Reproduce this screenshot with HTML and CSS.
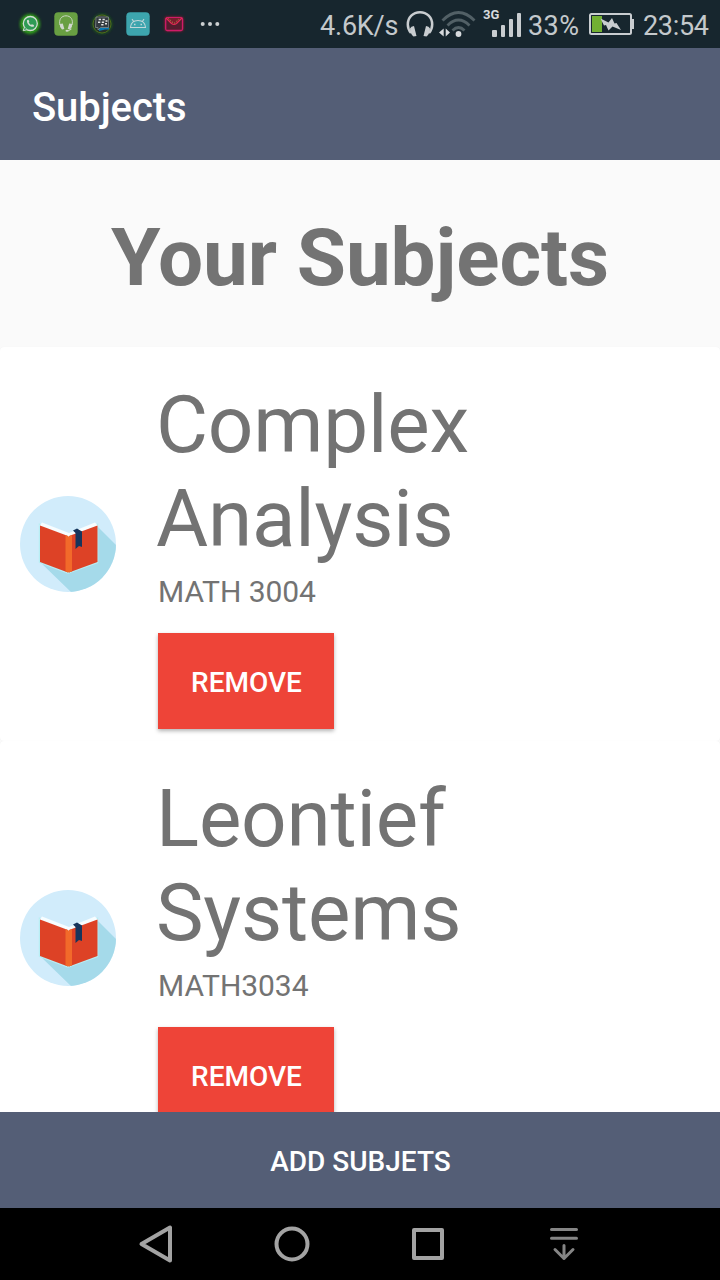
FILE: index.html
```html
<!DOCTYPE html>
<html lang="en">
<head>
<meta charset="utf-8">
<title>Subjects</title>
<link rel="stylesheet" href="styles.css">
</head>
<body>
<svg class="defs" width="0" height="0" aria-hidden="true">
  <defs>
    <clipPath id="disc"><circle cx="48" cy="48" r="48"/></clipPath>
    <filter id="glow" x="-50%" y="-50%" width="200%" height="200%"><feGaussianBlur stdDeviation="1.6"/></filter>
    <filter id="soft"><feGaussianBlur stdDeviation=".6"/></filter>
    <symbol id="book" viewBox="0 0 96 96">
      <g clip-path="url(#disc)">
        <rect width="96" height="96" fill="#d1ecfb"/>
        <path d="M77 30L96 49V96H51L20 66L48 76L77 66Z" fill="#a5daea"/>
      </g>
      <g filter="url(#soft)">
        <path d="M20 29L48 40L77 29V66L48 76.500L20 66Z" fill="none" stroke="#b9eef4" stroke-width="2.500"/>
        <path d="M22 26.500L49 37L75 26.500L78 30L48.500 42L19.500 30Z" fill="#f7fdff"/>
        <path d="M20 29.500L48 40V76.500L20 66Z" fill="#dd4227"/>
        <path d="M77.500 29.500L49 40V76.500L77.500 66Z" fill="#dd4227"/>
        <path d="M45.500 39L48.500 40.500L52 39V75.500L48.500 76.500L45.500 75.500Z" fill="#f26a2b"/>
        <path d="M53 34.500L57 32.500L62 35.500V51L59 50L55.500 53V37Z" fill="#17365c"/>
      </g>
    </symbol>
  </defs>
</svg>
<div class="screen">
  <header class="status">
    <div class="notifications">
      <svg width="24" height="24" viewBox="0 0 24 24">
        <circle cx="12" cy="12" r="10" fill="#32a512" filter="url(#glow)"/>
        <circle cx="12" cy="12" r="9" fill="#2b8c20"/>
        <circle cx="12.300" cy="11.500" r="7" fill="#2f9b55" stroke="#d3dcd3" stroke-width="1.300"/>
        <path d="M6.500 15L5.200 18.700L9 17.700" fill="#2f9b55" stroke="#d3dcd3" stroke-width="1"/>
        <path d="M9 8.300C8.500 12 12 15.300 15.700 14.800L16 13L13.900 12.200L12.900 13L10.700 10.700L11.300 9.700L10.500 7.800Z" fill="#d3dcd3"/>
      </svg>
      <svg width="24" height="24" viewBox="0 0 24 24">
        <rect x=".3" y=".3" width="23.400" height="23.400" rx="4" fill="#689f42"/>
        <path d="M6 13C4.500 7.500 7.500 3.800 12 3.800S19.500 7.500 18 13M17.500 17L14 19" fill="none" stroke="#c8d5c0" stroke-width="1"/>
        <path d="M5.700 12L8.800 11.500L10.300 17L8 17.500Q5.500 15.500 5.700 12ZM18.300 12L15.200 11.500L13.700 17L16 17.500Q18.500 15.500 18.300 12Z" fill="#d0d7ce"/>
        <ellipse cx="13" cy="18.700" rx="1.500" ry="1" fill="#d0d7ce"/>
      </svg>
      <svg width="24" height="24" viewBox="0 0 24 24">
        <circle cx="12" cy="12" r="10" fill="#205a1d" filter="url(#glow)"/>
        <circle cx="12" cy="12" r="9" fill="#252e2c" stroke="#4c6d19" stroke-width="1"/>
        <path d="M9 15.500H19V17.500L15 17.500L9 19Z" fill="#0878b5"/>
        <path d="M6 5H18.500V15.500H10.500L8 18V15.500H5.500Z" fill="#343a40" stroke="#8d9698" stroke-width=".7"/>
        <path d="M8.700 7.500H11M12.500 7.500H14.800M8 10.200H10.300M11.800 10.200H14.100M15.500 9H17.500M11.200 12.800H13.500M15 11.700H17" stroke="#e1e4e4" stroke-width="1.500"/>
      </svg>
      <svg width="24" height="24" viewBox="0 0 24 24">
        <rect x=".3" y=".3" width="23.400" height="23.400" rx="4" fill="#3da5ae"/>
        <path d="M4.500 15.500Q5 8.500 12 8.500T19.500 15.500ZM7.700 9.500L6 7.200M16.300 9.500L18 7.200" fill="none" stroke="#c2d7da" stroke-width="1.100"/>
        <path d="M8 12.500H9.500M14.500 12.500H16" stroke="#c2d7da" stroke-width="1.400"/>
      </svg>
      <svg width="24" height="24" viewBox="0 0 24 24">
        <rect x="3" y="5" width="18" height="14" rx="2" fill="#b3162e" filter="url(#glow)"/>
        <rect x="3.700" y="5.700" width="16.800" height="12.800" rx="1.500" fill="#541c2e" stroke="#cf1b69" stroke-width="1.300"/>
        <path d="M4 6L9.500 11.500Q12 13.500 14.500 11.500L20 6" fill="#761e2d" stroke="#e22b55" stroke-width="1.200"/>
        <path d="M6.500 6.500L12 11.500L17.500 6.500" fill="none" stroke="#c2964d" stroke-width="1" stroke-dasharray="1 1.500"/>
      </svg>
      <svg width="24" height="24" viewBox="0 0 24 24" fill="#ccd0d2"><circle cx="4.700" cy="12" r="2"/><circle cx="12" cy="12" r="2"/><circle cx="19.300" cy="12" r="2"/></svg>
    </div>
    <div class="system">
      <span class="speed">4.6K/s</span>
      <svg class="headset" width="28" height="28" viewBox="0 0 28 28">
        <path d="M5 23C2.800 20.500 1.800 17.500 1.800 14.500C1.800 7.300 7 2.200 14 2.200S26.200 7.300 26.200 14.500C26.200 17.500 25.200 20.500 23 23" fill="none" stroke="#c9cdd0" stroke-width="2.500"/>
        <path d="M4 18.500Q5 16 8 16L10.500 26L7.500 26.500Q4 23.500 4 18.500ZM24 18.500Q23 16 20 16L17.500 26L20.500 26.500Q24 23.500 24 18.500Z" fill="#c9cdd0"/>
      </svg>
      <svg class="wifi" width="38" height="28" viewBox="0 0 38 28">
        <g fill="none" stroke="#526066" stroke-width="2.800">
          <path d="M3.500 10.500Q19.500 -5.500 35.500 10.500"/><path d="M8.500 15.500Q19.500 4.500 30.500 15.500"/><path d="M13.500 20.500Q19.500 14.500 25.500 20.500"/>
        </g>
        <circle cx="19.500" cy="24" r="2.900" fill="#d7dadd"/>
        <path d="M0 22.500L4.700 18.500V26.500ZM11 22.500L6.700 18.500V26.500Z" fill="#d7dadd"/>
      </svg>
      <span class="signal">
        <b class="network">3G</b>
        <svg width="30" height="26" viewBox="0 0 30 26" fill="#c9cdd0"><rect x="0" y="18" width="5" height="7" rx="1"/><rect x="9" y="13" width="4" height="12" rx="1"/><rect x="17" y="7" width="4" height="18" rx="1"/><rect x="25" y="1" width="4" height="24" rx="1"/></svg>
      </span>
      <span class="percent">33%</span>
      <svg class="battery" width="46" height="24" viewBox="0 0 46 24">
        <rect x="1" y="2" width="41" height="20" rx="1.500" fill="none" stroke="#c9cdd0" stroke-width="2"/>
        <path d="M43 7H45V17H43Z" fill="#c9cdd0"/>
        <rect x="3" y="4" width="10" height="16" fill="#72b032"/>
        <path d="M11.500 6.500L19.500 10.500L23 6L25.500 11.500L27.500 11L32 18L23.500 14.500L19.500 18.500L17 13L15 13.500Z" fill="#c9cdd0"/>
      </svg>
      <span class="clock">23:54</span>
    </div>
  </header>
  <div class="appbar">Subjects</div>
  <main class="content">
    <h1 class="heading">Your Subjects</h1>
    <section class="card">
      <svg class="book"><use href="#book"/></svg>
      <div class="details">
        <h2 class="name">Complex Analysis</h2>
        <p class="code">MATH 3004</p>
        <button class="remove">REMOVE</button>
      </div>
    </section>
    <section class="card">
      <svg class="book"><use href="#book"/></svg>
      <div class="details">
        <h2 class="name">Leontief Systems</h2>
        <p class="code">MATH3034</p>
        <button class="remove">REMOVE</button>
      </div>
    </section>
  </main>
  <button class="add">ADD SUBJETS</button>
  <nav class="navbar">
    <svg class="navicon" viewBox="0 0 40 40"><path d="M5.500 20L34 3.500V36.500Z"/></svg>
    <svg class="navicon" viewBox="0 0 40 40"><circle cx="20" cy="20" r="15.500"/></svg>
    <svg class="navicon" viewBox="0 0 40 40"><rect x="6" y="6" width="28" height="28"/></svg>
    <svg class="navicon collapse" viewBox="0 0 40 40"><path d="M7.500 5.500H32.500M7.500 14.300H32.500M20 21.500V34.500M11 25.500L20 34.500L29 25.500"/></svg>
  </nav>
</div>
</body>
</html>
```
FILE: styles.css
```css
* { box-sizing: border-box; margin: 0; }
body { background: #fafafa; font-family: Roboto, sans-serif; }
button { border: 0; padding: 0; font-family: inherit; }
svg { display: block; flex: none; }
.defs { position: absolute; }
.screen { width: 720px; height: 1280px; display: flex; flex-direction: column; overflow: hidden; }
.status { height: 48px; flex: none; display: flex; justify-content: space-between; padding: 0 11px 0 18px; background: #17262e; color: #c4c9cc; }
.notifications { display: flex; align-items: center; gap: 12px; }
.system { display: flex; align-items: center; font-size: 27px; line-height: 48px; white-space: nowrap; padding-top: 3px; }
.speed { width: 86px; letter-spacing: -.2px; }
.wifi { margin-left: 5px; }
.headset, .wifi { margin-top: -3px; }
.signal { position: relative; width: 36px; margin-left: 15px; }
.network { position: absolute; left: -9px; top: -7px; font-size: 13px; line-height: 16px; color: #d7dadd; }
.signal svg { margin-top: -2px; }
.percent { width: 61px; letter-spacing: .4px; }
.battery { margin-top: -3px; }
.clock { width: 66px; margin-left: 8px; letter-spacing: -.3px; }
.appbar { height: 112px; flex: none; padding: 4px 32px 0; background: #545e76; color: #fff; font-size: 40px; font-weight: 500; line-height: 112px; letter-spacing: -.1px; }
.content { flex: 1; min-height: 0; overflow: hidden; }
.heading { height: 187px; padding-top: 51px; text-align: center; font-size: 80px; line-height: 94px; font-weight: 700; color: #737373; letter-spacing: -.08px; }
.card { height: 394px; display: flex; align-items: center; gap: 42px; padding-left: 20px; background: #fff; border-radius: 4px; box-shadow: 0 0 1px rgba(0, 0, 0, .06); }
.book { width: 96px; height: 96px; }
.details { align-self: flex-start; width: 520px; padding-top: 31px; color: #737373; }
.name { width: 400px; margin-left: -2px; font-size: 80px; line-height: 94px; font-weight: 400; letter-spacing: -.2px; }
.code { padding-top: 8px; font-size: 30px; line-height: 35px; letter-spacing: -.05px; }
.remove { display: block; width: 176px; height: 96px; margin-top: 24px; padding: 3px 0 0 1px; background: #ee4438; color: #fff; font-size: 28px; font-weight: 500; box-shadow: 0 2px 4px rgba(0, 0, 0, .3); }
.add { height: 96px; flex: none; padding: 3px 0 0 1px; background: #545e76; color: #fff; font-size: 28px; font-weight: 500; }
.navbar { height: 72px; flex: none; display: flex; align-items: center; gap: 96px; padding-left: 136px; background: #000; }
.navicon { width: 40px; height: 40px; fill: none; stroke: #a3a3a3; stroke-width: 4; stroke-linejoin: round; stroke-linecap: round; }
.collapse { stroke: #858585; stroke-width: 3; }
```
